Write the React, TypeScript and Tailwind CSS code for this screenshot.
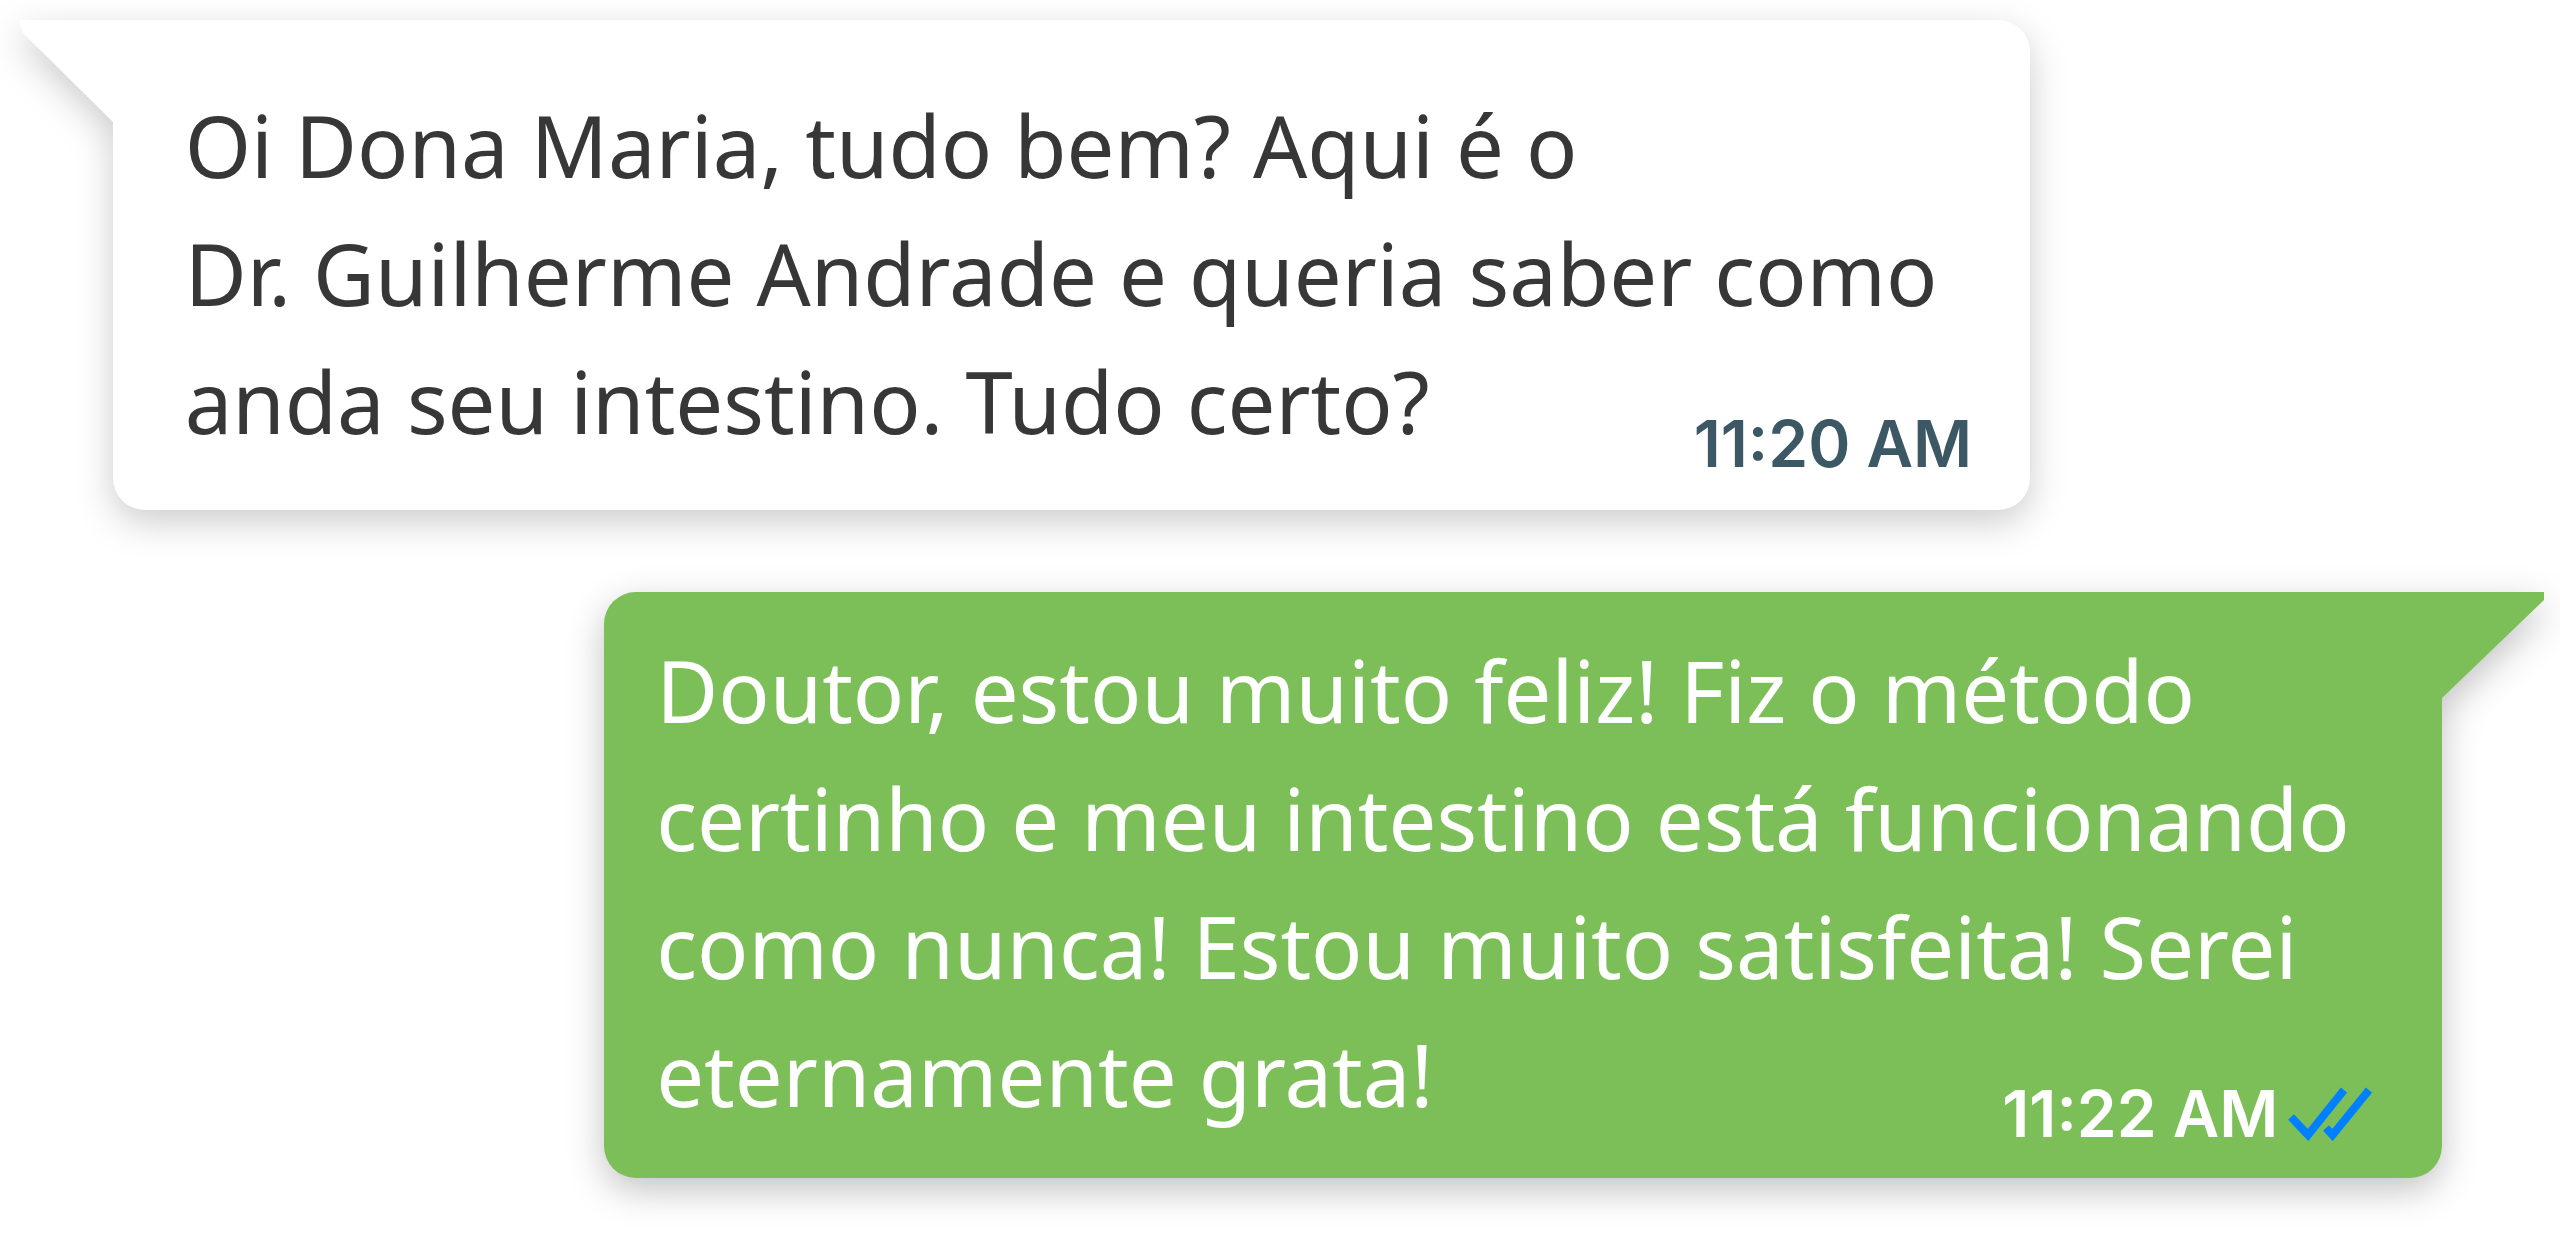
const messages = {
  received: ['Oi Dona Maria, tudo bem? Aqui é o', 'Dr. Guilherme Andrade e queria saber como', 'anda seu intestino. Tudo certo?'],
  sent: ['Doutor, estou muito feliz! Fiz o método', 'certinho e meu intestino está funcionando', 'como nunca! Estou muito satisfeita! Serei', 'eternamente grata!'],
}

function DoubleCheck() {
  return (
    <svg viewBox="0 0 84 54" className="h-[54px] w-[84px]" fill="none" stroke="#0080ff" strokeWidth="8" aria-hidden="true">
      <path d="M3 30 20 48 56 3" />
      <path d="M38 41 44.5 48 81 3" />
    </svg>
  )
}

export default function App() {
  return (
    <main className="flex w-full flex-col gap-[82px] overflow-hidden bg-white pt-5 pb-14 font-['Noto_Sans',sans-serif] text-[85px] leading-[128px]">
      {/* Received message */}
      <article className="relative ml-[4.4%] w-[74.9%] rounded-[32px] rounded-tl-none bg-white px-[72px] pt-[61px] pb-[45px] text-[#373737] drop-shadow-[0_12px_18px_rgba(0,0,0,0.2)]">
        <svg viewBox="0 0 94 102" className="absolute top-0 right-full h-[102px] w-[94px]" fill="#fff" aria-hidden="true">
          <path d="M0 0H94V102L4 13Z" />
        </svg>
        <p>
          {messages.received.map((line) => (
            <span key={line} className="block whitespace-nowrap">{line}</span>
          ))}
        </p>
        <time className="absolute right-[58px] bottom-9 font-[Inter,sans-serif] text-[64px] leading-[60px] font-semibold text-[#3d5865]">11:20 AM</time>
      </article>

      {/* Sent message */}
      <article className="relative mr-[4.6%] ml-auto w-[71.8%] rounded-[32px] rounded-tr-none bg-[#7cbf59] px-[52px] pt-[34px] pb-10 text-white drop-shadow-[0_12px_18px_rgba(0,0,0,0.24)]">
        <svg viewBox="0 0 102 106" className="absolute top-0 left-full h-[106px] w-[102px]" fill="#7cbf59" aria-hidden="true">
          <path d="M0 0H102V8L0 106Z" />
        </svg>
        <p>
          {messages.sent.map((line) => (
            <span key={line} className="block whitespace-nowrap">{line}</span>
          ))}
        </p>
        <div className="absolute right-[70px] bottom-[34px] flex items-center gap-2.5">
          <time className="font-[Inter,sans-serif] text-[64px] leading-[60px] font-semibold">11:22 AM</time>
          <DoubleCheck />
        </div>
      </article>
    </main>
  )
}
